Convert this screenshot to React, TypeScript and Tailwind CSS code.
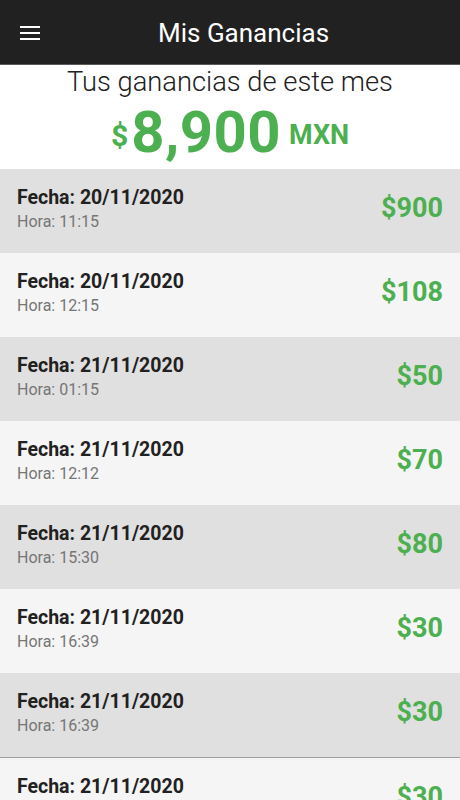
import React from "react";

const rows = [
  { fecha: "20/11/2020", hora: "11:15", monto: "$900" },
  { fecha: "20/11/2020", hora: "12:15", monto: "$108" },
  { fecha: "21/11/2020", hora: "01:15", monto: "$50" },
  { fecha: "21/11/2020", hora: "12:12", monto: "$70" },
  { fecha: "21/11/2020", hora: "15:30", monto: "$80" },
  { fecha: "21/11/2020", hora: "16:39", monto: "$30" },
  { fecha: "21/11/2020", hora: "16:39", monto: "$30" },
  { fecha: "21/11/2020", hora: "16:39", monto: "$30" },
];

export default function App() {
  return (
    <div
      className="w-[460px] h-[800px] overflow-hidden bg-[#f5f5f5]"
      style={{ fontFamily: "Roboto, 'Noto Sans', sans-serif" }}
    >
      <header className="h-[65px] bg-[#212121] border-b border-[#5a5a5a] flex items-center pl-5 pt-[2px]">
        <svg width="20" height="14" viewBox="0 0 20 14" className="shrink-0">
          <rect x="0" y="0" width="20" height="2" fill="#fff" />
          <rect x="0" y="6" width="20" height="2" fill="#fff" />
          <rect x="0" y="12" width="20" height="2" fill="#fff" />
        </svg>
        <h1 className="ml-[118px] text-white text-[26px] leading-[30px] font-normal">
          Mis Ganancias
        </h1>
      </header>
      <section className="h-[104px] bg-white flex flex-col items-center">
        <p className="text-[27.3px] leading-[30px] font-light font-['Roboto_Light',Roboto,sans-serif] text-[#212121] mt-[2px]">
          Tus ganancias de este mes
        </p>
        <div className="flex items-baseline text-[#4caf50] font-bold leading-none mt-[6px]">
          <span className="text-[30px] mr-[3px] relative -top-[6px]">$</span>
          <span className="text-[58px] tracking-[0.5px]">8,900</span>
          <span className="text-[27px] ml-[8px] relative -top-[8px]">MXN</span>
        </div>
      </section>
      <div className="flex flex-col">
        {rows.map((r, i) => (
          <div
            key={i}
            className={`h-[84px] flex items-start justify-between pl-[17px] pr-[17px] ${
              i % 2 === 0 ? "bg-[#e0e0e0]" : "bg-[#f5f5f5]"
            } ${i === 7 ? "border-t border-[#9e9e9e]" : ""}`}
          >
            <div className="flex flex-col pt-[17px]">
              <span className="text-[19.5px] leading-[24px] font-bold text-[#212121]">
                Fecha: {r.fecha}
              </span>
              <span className="text-[16px] leading-[20px] text-[#757575] mt-[2px]">
                Hora: {r.hora}
              </span>
            </div>
            <span className="text-[27px] leading-[32px] font-bold text-[#4caf50] mt-[23px]">
              {r.monto}
            </span>
          </div>
        ))}
      </div>
    </div>
  );
}
